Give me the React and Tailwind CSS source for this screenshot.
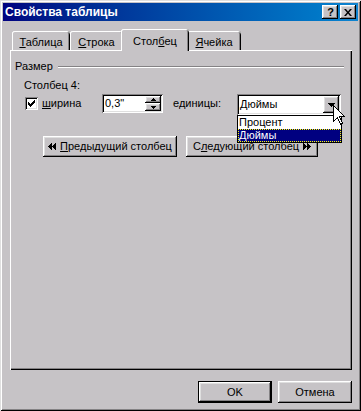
import React from 'react'

const Raised = 'shadow-[inset_-1px_-1px_0_#000,inset_1px_1px_0_#fff,inset_-2px_-2px_0_#848284,inset_2px_2px_0_#dfdfdf]'

const UpArrow = () => (
  <svg width="5" height="3" viewBox="0 0 5 3" shapeRendering="crispEdges">
    <path d="M2 0h1v1h1v1h1v1H0V2h1V1h1z" fill="#000" />
  </svg>
)

const DownArrow = ({ w = 5, d = 'M0 0h5v1H4v1H3v1H2V2H1V1H0z', h = 3 }) => (
  <svg width={w} height={h} viewBox={`0 0 ${w} ${h}`} shapeRendering="crispEdges">
    <path d={d} fill="#000" />
  </svg>
)

const TriLeft = () => (
  <svg width="8" height="7" viewBox="0 0 8 7" shapeRendering="crispEdges">
    <path d="M3 0h1v7H3V6H2V5H1V4H0V3h1V2h1V1h1z" fill="#000" />
    <path d="M7 0h1v7H7V6H6V5H5V4H4V3h1V2h1V1h1z" fill="#000" />
  </svg>
)

const TriRight = () => (
  <svg width="8" height="7" viewBox="0 0 8 7" shapeRendering="crispEdges">
    <path d="M0 0h1v1h1v1h1v1h1v1H3v1H2v1H1v1H0z" fill="#000" />
    <path d="M4 0h1v1h1v1h1v1h1v1H7v1H6v1H5v1H4z" fill="#000" />
  </svg>
)

const TitleBar = () => (
  <div className="h-[18px] flex items-center bg-linear-to-r from-[#000080] to-[#1084d0] pl-[2px] pr-[2px]">
    <span className="flex-1 text-white font-bold text-[12px] leading-[14px]">Свойства таблицы</span>
    <div className="flex gap-[2px]">
      <div className="w-[16px] h-[14px] bg-[#c6c3c6] shadow-[inset_-1px_-1px_0_#000,inset_1px_1px_0_#fff,inset_-2px_-2px_0_#848284,inset_2px_2px_0_#dfdfdf] flex items-center justify-center pl-[1px] font-bold text-[11px] leading-none">
        ?
      </div>
      <div className="w-[16px] h-[14px] bg-[#c6c3c6] shadow-[inset_-1px_-1px_0_#000,inset_1px_1px_0_#fff,inset_-2px_-2px_0_#848284,inset_2px_2px_0_#dfdfdf] flex items-center justify-center">
        <svg width="8" height="7" viewBox="0 0 8 7">
          <path d="M0 0h2l2 2.5L6 0h2L5 3.5 8 7H6L4 4.5 2 7H0l3-3.5z" fill="#000" />
        </svg>
      </div>
    </div>
  </div>
)

const Tabs = () => (
  <div className="flex items-end h-[21px] pl-[2px]">
    <div className="w-[58px] h-[19px] pt-[3px] flex items-center justify-center rounded-t-[3px] shadow-[inset_1px_0_0_#fff,inset_0_1px_0_#fff,inset_-1px_0_0_#000,inset_-2px_0_0_#848284]">
      <span><u>Т</u>аблица</span>
    </div>
    <div className="w-[53px] h-[19px] pt-[3px] flex items-center justify-center rounded-t-[3px] shadow-[inset_1px_0_0_#fff,inset_0_1px_0_#fff,inset_-1px_0_0_#000,inset_-2px_0_0_#848284]">
      <span><u>С</u>трока</span>
    </div>
    <div className="relative z-10 -mx-[2px] -mb-[1px] w-[68px] h-[22px] pt-[2px] bg-[#c6c3c6] flex items-center justify-center rounded-t-[3px] shadow-[inset_1px_0_0_#fff,inset_0_1px_0_#fff,inset_-1px_0_0_#000,inset_-2px_0_0_#848284]">
      <span>Стол<u>б</u>ец</span>
    </div>
    <div className="w-[54px] h-[19px] pt-[3px] flex items-center justify-center rounded-t-[3px] shadow-[inset_1px_0_0_#fff,inset_0_1px_0_#fff,inset_-1px_0_0_#000,inset_-2px_0_0_#848284]">
      <span><u>Я</u>чейка</span>
    </div>
  </div>
)

const Panel = () => (
  <div className="relative h-[320px] pt-[10px] bg-[#c6c3c6] shadow-[inset_1px_1px_0_#fff,inset_-1px_-1px_0_#000,inset_-2px_-2px_0_#848284]">
    {/* group legend */}
    <div className="flex items-center h-[13px] pl-[5px] pr-[8px]">
      <span>Размер</span>
      <div className="flex-1 ml-[5px] h-[2px] border-t border-t-[#848284] border-b border-b-white" />
    </div>

    <div className="mt-[6px] pl-[14px] h-[13px]">Столбец 4:</div>

    <div className="mt-[2px] flex items-start h-[21px]">
      <div className="ml-[15px] mt-[3px] w-[13px] h-[13px] bg-white flex items-center justify-center shadow-[inset_1px_1px_0_#848284,inset_-1px_-1px_0_#fff,inset_2px_2px_0_#000,inset_-2px_-2px_0_#dfdfdf]">
        <svg width="7" height="7" viewBox="0 0 7 7" shapeRendering="crispEdges">
          <path d="M0 2h1v1h1v1h1V3h1V2h1V1h1V0h1v3H6v1H5v1H4v1H3v1H2V6H1V5H0z" fill="#000" />
        </svg>
      </div>
      <span className="ml-[4px] w-[60px] mt-[3px]"><u>ш</u>ирина</span>

      <div className="w-[61px] h-[19px] bg-white flex items-center pl-[3px] shadow-[inset_1px_1px_0_#848284,inset_-1px_-1px_0_#fff,inset_2px_2px_0_#000,inset_-2px_-2px_0_#dfdfdf]">
        <span>0,3"</span>
        <div className="ml-auto mr-[2px] flex flex-col w-[16px] h-[15px]">
          <div className={`h-[7px] bg-[#c6c3c6] flex items-center justify-center ${Raised}`}>
            <UpArrow />
          </div>
          <div className={`h-[8px] bg-[#c6c3c6] flex items-center justify-center ${Raised}`}>
            <DownArrow />
          </div>
        </div>
      </div>

      <span className="ml-[10px] w-[64px] mt-[3px]">е<u>д</u>иницы:</span>

      <div className="relative w-[104px] h-[21px] bg-white flex items-center pl-[3px] shadow-[inset_1px_1px_0_#848284,inset_-1px_-1px_0_#fff,inset_2px_2px_0_#000,inset_-2px_-2px_0_#dfdfdf]">
        <span>Дюймы</span>
        <div className={`ml-auto mr-[2px] w-[16px] h-[17px] bg-[#c6c3c6] flex items-center justify-center ${Raised}`}>
          <DownArrow w={7} h={4} d="M0 0h7v1H6v1H5v1H4v1H3V3H2V2H1V1H0z" />
        </div>

        {/* open dropdown list */}
        <div className="absolute z-20 top-[21px] left-0 w-[105px] bg-white border border-black">
          <div className="h-[13px] pl-[1px] leading-[13px]">Процент</div>
          <div className="h-[13px] pl-[1px] leading-[13px] bg-[#000080] text-white outline-1 outline-dotted outline-[#ffff00] -outline-offset-1">Дюймы</div>
        </div>

        {/* mouse pointer */}
        <svg className="absolute z-30 left-[96px] top-[11px]" width="13" height="21" viewBox="0 0 13 21" shapeRendering="crispEdges">
          <path d="M0.5 0.5 L0.5 16.5 L4.5 12.5 L7.5 19.5 L9.5 18.5 L6.5 11.5 L11.5 11.5 Z" fill="#fff" stroke="#000" strokeWidth="1" />
        </svg>
      </div>
    </div>

    <div className="mt-[21px] flex pl-[33px] gap-[9px]">
      <button type="button" className={`w-[134px] h-[21px] bg-[#c6c3c6] flex items-center justify-center gap-[4px] ${Raised}`}>
        <TriLeft />
        <span><u>П</u>редыдущий столбец</span>
      </button>
      <button type="button" className={`w-[132px] h-[21px] bg-[#c6c3c6] flex items-center justify-center gap-[4px] ${Raised}`}>
        <span>С<u>л</u>едующий столбец</span>
        <TriRight />
      </button>
    </div>
  </div>
)

export default function App() {
  return (
    <div className="w-[361px] h-[411px] p-[3px] bg-[#c6c3c6] text-black text-[11px] leading-[13px] font-['Liberation_Sans',Arial,sans-serif] shadow-[inset_1px_1px_0_#dfdfdf,inset_-1px_-1px_0_#000,inset_2px_2px_0_#fff,inset_-2px_-2px_0_#848284]">
      <TitleBar />
      <div className="ml-[7px] mt-[8px] w-[342px]">
        <Tabs />
        <Panel />
        <div className="mt-[11px] flex justify-end gap-[6px]">
          <button type="button" className={`w-[74px] h-[22px] bg-[#c6c3c6] border border-black flex items-center justify-center ${Raised}`}>
            OK
          </button>
          <button type="button" className={`w-[74px] h-[22px] bg-[#c6c3c6] flex items-center justify-center ${Raised}`}>
            Отмена
          </button>
        </div>
      </div>
    </div>
  )
}
